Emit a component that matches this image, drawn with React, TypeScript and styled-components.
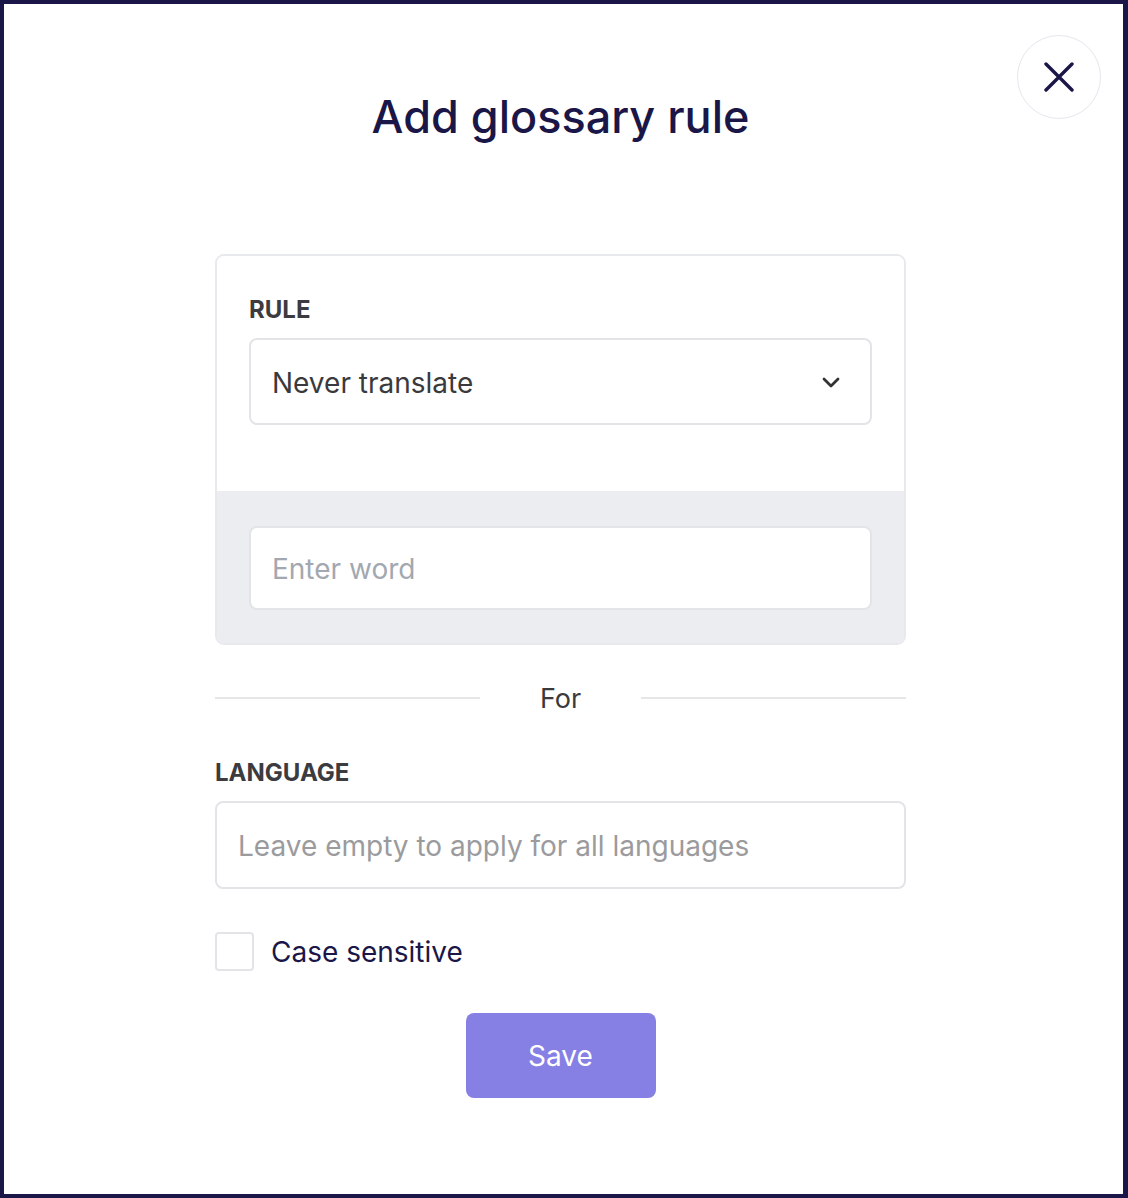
import React from 'react';
import styled, { createGlobalStyle } from 'styled-components';

const GlobalStyle = createGlobalStyle`
	* { box-sizing: border-box; }
	body {
		margin: 0;
		font-family: Inter, "Noto Sans", sans-serif;
		background: #fff;
	}
`;

const Frame = styled.div`
	position: relative;
	width: 1128px;
	height: 1198px;
	border: 4px solid #1a1748;
	border-right-width: 5px;
	background: #fff;
	display: flex;
	flex-direction: column;
	align-items: center;
	padding: 85px 6px 0 0;
`;

const CloseButton = styled.button`
	position: absolute;
	top: 31px;
	right: 22px;
	width: 84px;
	height: 84px;
	border-radius: 50%;
	border: 1.5px solid #e6e6ee;
	background: #fff;
	display: flex;
	align-items: center;
	justify-content: center;
	padding: 0;
	cursor: pointer;
`;

const Title = styled.h1`
	margin: 0;
	font-size: 45px;
	line-height: 56px;
	font-weight: 500;
	color: #1a1748;
`;

const Form = styled.div`
	width: 691px;
	margin-top: 109px;
	display: flex;
	flex-direction: column;
`;

const Card = styled.div`
	border: 2px solid #e8e9ed;
	border-radius: 9px;
	overflow: hidden;
`;

const CardSection = styled.div<{ $muted?: boolean }>`
	background: ${p => (p.$muted ? '#ecedf1' : '#fff')};
	padding: ${p => (p.$muted ? '35px 32px 33px' : '39px 32px 66px')};
	display: flex;
	flex-direction: column;
`;

const Label = styled.div`
	font-size: 24px;
	line-height: 30px;
	font-weight: 700;
	color: #3b3b40;
	margin-bottom: 13px;
`;

const Field = styled.div<{ $height: number }>`
	height: ${p => p.$height}px;
	border: 2px solid #e2e4e8;
	border-radius: 8px;
	background: #fff;
	display: flex;
	align-items: center;
	justify-content: space-between;
	padding: 2px 30px 0 21px;
	font-size: 28px;
	color: #3a3a3d;
`;

const Placeholder = styled.span<{ $tone?: string }>`
	color: ${p => p.$tone || '#a3a8b0'};
`;

const Divider = styled.div`
	margin-top: 38px;
	height: 30px;
	display: flex;
	align-items: center;
	gap: 60px;
	font-size: 27px;
	color: #3a3a3d;

	&::before,
	&::after {
		content: '';
		flex: 1;
		height: 2px;
		background: #e6e6e6;
	}
`;

const Group = styled.div`
	margin-top: 45px;
	display: flex;
	flex-direction: column;
`;

const CheckRow = styled.label`
	margin-top: 43px;
	display: flex;
	align-items: center;
	gap: 17px;
	font-size: 28px;
	color: #1a1748;
`;

const Box = styled.span`
	width: 39px;
	height: 39px;
	border: 2px solid #e2e4e8;
	border-radius: 4px;
	background: #fff;
`;

const SaveButton = styled.button`
	margin: 42px auto 0;
	width: 190px;
	height: 85px;
	border: none;
	border-radius: 8px;
	background: #8680e5;
	color: #fff;
	font-family: Inter, "Noto Sans", sans-serif;
	font-size: 28px;
	cursor: pointer;
`;

const App = () => {
	return (
		<>
			<GlobalStyle />
			<Frame>
				<CloseButton aria-label="Close">
					<svg width="30" height="30" viewBox="0 0 30 30" fill="none">
						<path d="M2 2L28 28M28 2L2 28" stroke="#1a1748" strokeWidth="3.4" strokeLinecap="round" />
					</svg>
				</CloseButton>
				<Title>Add glossary rule</Title>
				<Form>
					<Card>
						<CardSection>
							<Label>RULE</Label>
							<Field $height={87}>
								<span>Never translate</span>
								<svg width="18" height="11" viewBox="0 0 18 11" fill="none">
									<path d="M2 2L9 9L16 2" stroke="#333" strokeWidth="2.8" strokeLinecap="round" strokeLinejoin="round" />
								</svg>
							</Field>
						</CardSection>
						<CardSection $muted>
							<Field $height={84}>
								<Placeholder>Enter word</Placeholder>
							</Field>
						</CardSection>
					</Card>
					<Divider>For</Divider>
					<Group>
						<Label>LANGUAGE</Label>
						<Field $height={88}>
							<Placeholder $tone="#9b9b9e">Leave empty to apply for all languages</Placeholder>
						</Field>
					</Group>
					<CheckRow>
						<Box />
						Case sensitive
					</CheckRow>
					<SaveButton>Save</SaveButton>
				</Form>
			</Frame>
		</>
	);
};

export default App;
